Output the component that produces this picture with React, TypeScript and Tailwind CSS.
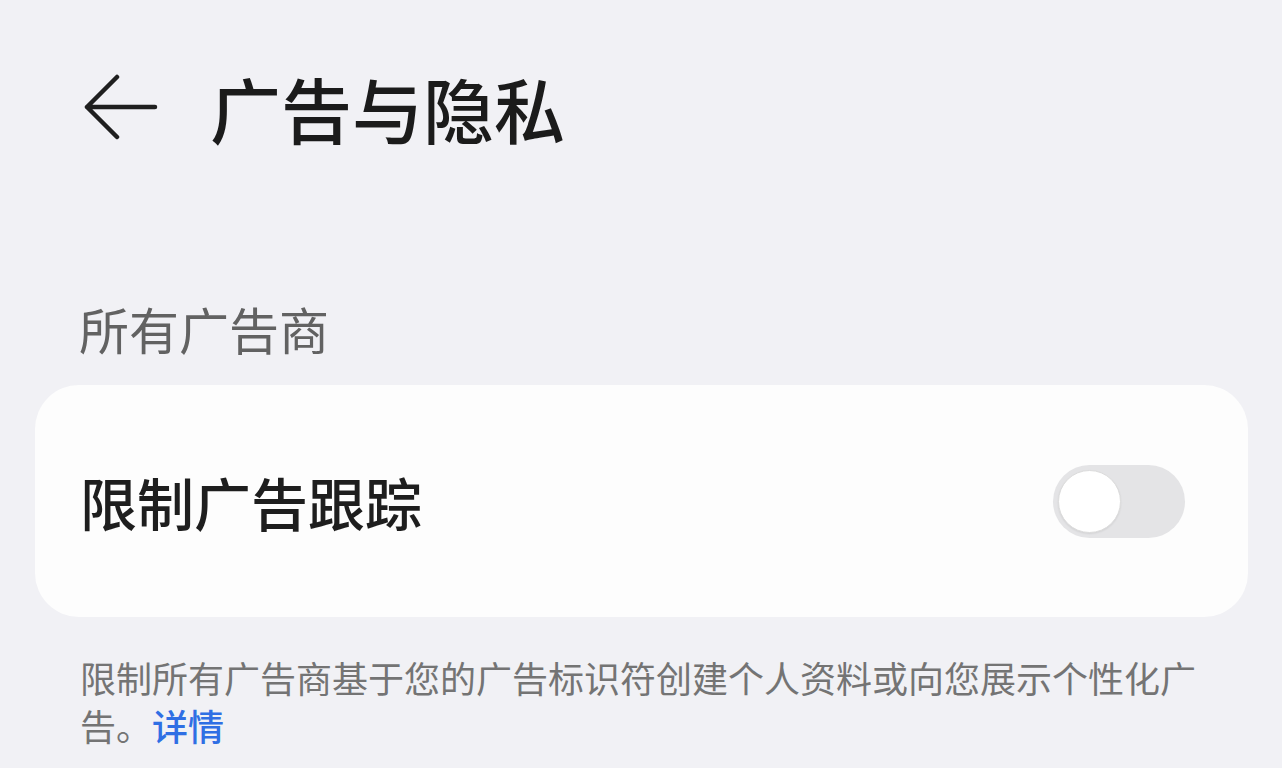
import React from 'react';

const cjk = '"Noto Sans CJK SC", "Noto Sans", sans-serif';

function BackArrow() {
  return (
    <svg width="74" height="66" viewBox="0 0 74 66" fill="none" className="shrink-0">
      <path d="M33 3 L3 33 L33 63 M3 33 H71" stroke="#1f1f1f" strokeWidth="4.5" strokeLinecap="round" strokeLinejoin="round" />
    </svg>
  );
}

function Toggle() {
  return (
    <div className="relative h-[73px] w-[132px] shrink-0 rounded-full bg-[#e4e4e6]">
      <span className="absolute left-[5px] top-[5px] h-[63px] w-[63px] rounded-full border border-[#dcdcdc] bg-white shadow-[0_1px_2px_rgba(0,0,0,0.08)]" />
    </div>
  );
}

export default function App() {
  return (
    <div className="h-[768px] w-full overflow-hidden bg-[#f1f1f5]" style={{ fontFamily: cjk }}>
      <header className="mt-[57px] flex h-[100px] items-center pl-[84px]">
        <BackArrow />
        <h1 className="ml-[52px] text-[71px] leading-none font-medium text-[#1b1b1b]">广告与隐私</h1>
      </header>

      <div className="mt-[141px] flex h-[60px] items-center pl-[79px] text-[50px] leading-none text-[#626262]">
        所有广告商
      </div>

      <section className="mt-[27px] ml-[35px] mr-[34px] flex h-[232px] items-center justify-between rounded-[44px] bg-[#fdfdfd] pl-[45px] pr-[63px]">
        <span className="text-[57px] leading-none font-medium text-[#1e1e1e]">限制广告跟踪</span>
        <Toggle />
      </section>

      <p className="mt-[36px] w-[1210px] pl-[80px] text-[36px] leading-[48px] text-[#747474]">
        限制所有广告商基于您的广告标识符创建个人资料或向您展示个性化广告。<a className="font-medium text-[#2f6fe4]">详情</a>
      </p>
    </div>
  );
}
